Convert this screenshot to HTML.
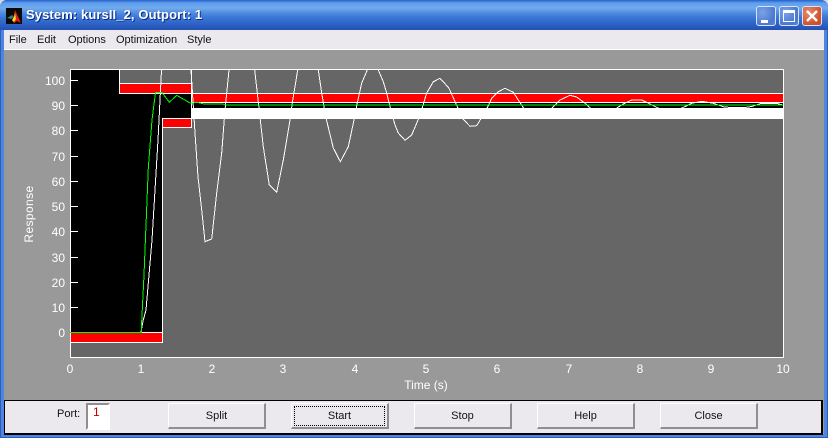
<!DOCTYPE html>
<html><head><meta charset="utf-8"><style>
html,body{margin:0;padding:0;background:#d8d8d8;}
#w{position:absolute;left:0;top:0;width:828px;height:438px;overflow:hidden;font-family:"Liberation Sans",sans-serif;background:#d4d8e4;}
#frame{position:absolute;left:0;top:0;width:828px;height:438px;box-sizing:border-box;border-radius:7px 7px 0 0;background:#4f86dc;border:1px solid #2a5cc4;}
#tb{position:absolute;left:0;top:0;width:828px;height:30px;border-radius:7px 7px 0 0;background:linear-gradient(#2a5ec8 0,#5c9eee 3px,#72aaec 8px,#4f8be0 13px,#3a74d4 18px,#2d62c6 24px,#2450b0 30px);}
#title{position:absolute;left:26px;top:7px;font-size:13px;font-weight:bold;color:#fff;text-shadow:1px 1px 0 #0a2a80;white-space:nowrap;letter-spacing:.1px;}
#menu{position:absolute;left:4px;top:30px;width:820px;height:19px;background:#ebe9ee;border-bottom:1px solid #fff;}
.m{position:absolute;top:34px;font-size:11px;line-height:13px;color:#111;white-space:nowrap;}
#fig{position:absolute;left:4px;top:50px;width:820px;height:384px;background:#999;}
#panel{position:absolute;left:4px;top:400px;width:816px;height:32px;background:#ebe9ee;border:1px solid #000;border-width:1px 2px 2px 1px;}
.b{position:absolute;top:403px;width:98px;height:26px;box-sizing:border-box;background:#ebe9ee;border:1px solid;border-width:1px 2px 2px 1px;border-color:#fff #8f8f8f #8f8f8f #fff;font-size:11px;line-height:24px;text-align:center;color:#111;}
#edit{position:absolute;left:86px;top:403px;width:24px;height:27px;box-sizing:border-box;background:#fff;border:2px solid;border-color:#8f8f8f #fff #fff #8f8f8f;color:#c00000;font-size:12px;line-height:14px;padding-left:5px;}
#port{position:absolute;left:57px;top:408px;font-size:11px;line-height:13px;color:#111;}
.wb{position:absolute;top:6px;width:20px;height:20px;box-sizing:border-box;border:1px solid #d8e4f8;border-radius:3px;background:radial-gradient(circle at 30% 30%,#7aa4e8,#4a78d0 70%,#5a88dc);}
#dots{position:absolute;left:294px;top:406px;width:91px;height:20px;box-sizing:border-box;border:1px dotted #000;}
svg{position:absolute;left:0;top:0;}
</style></head><body>
<div id="w">
<div id="frame"></div>
<div id="tb"></div>
<svg width="16" height="16" style="left:6px;top:8px" viewBox="0 0 16 16"><rect width="16" height="16" fill="#0a0a0a"/><path d="M1 10 L6 7 L8 9 L5 11 Z" fill="#3a7a80"/><path d="M9 2 L15 15 L11 13 L8 15 L6 12 L8 8 Z" fill="#e02010"/><path d="M9 5 L8 9 L6 12 L8 14 L10 11 Z" fill="#f8e020"/></svg>
<div id="title">System: kursII_2, Outport: 1</div>
<div class="wb" style="left:756px"><div style="position:absolute;left:4px;top:13px;width:7px;height:3px;background:#fff"></div></div>
<div class="wb" style="left:779px"><div style="position:absolute;left:3px;top:3px;width:12px;height:12px;box-sizing:border-box;border:1px solid #fff;border-top-width:3px"></div></div>
<div class="wb" style="left:802px;background:radial-gradient(circle at 30% 30%,#e88a70,#d0512a 70%,#c84a20)"><svg width="18" height="18" viewBox="0 0 18 18"><path d="M4 4 L14 14 M14 4 L4 14" stroke="#fff" stroke-width="2.4"/></svg></div>
<div id="menu"></div>
<div class="m" style="left:9px">File</div>
<div class="m" style="left:37px">Edit</div>
<div class="m" style="left:68px">Options</div>
<div class="m" style="left:116px">Optimization</div>
<div class="m" style="left:187px">Style</div>
<div id="fig"></div>
<svg width="828" height="438" viewBox="0 0 828 438">
<g shape-rendering="crispEdges">
<rect x="70" y="69" width="714" height="289" fill="#666"/>
<path d="M70 69H119V93H192V118H162V332H70Z" fill="#000"/>
<rect x="192" y="102" width="592" height="6" fill="#000"/>
<rect x="119" y="83" width="73" height="11" fill="#f00"/>
<rect x="192" y="93" width="591" height="10" fill="#f00"/>
<rect x="162" y="118" width="30" height="10" fill="#f00"/>
<rect x="70" y="332" width="93" height="10" fill="#f00"/>
<rect x="191" y="108" width="592" height="11" fill="#fff"/>
<g fill="#fff">
<rect x="119" y="69" width="1" height="24"/>
<rect x="119" y="83" width="73" height="1"/>
<rect x="119" y="93" width="73" height="1"/>
<rect x="191" y="69" width="1" height="50"/>
<rect x="192" y="93" width="591" height="1"/>
<rect x="192" y="102" width="591" height="1"/>
<rect x="162" y="118" width="30" height="1"/>
<rect x="162" y="127" width="30" height="1"/>
<rect x="162" y="118" width="1" height="225"/>
<rect x="191" y="118" width="1" height="10"/>
<rect x="70" y="342" width="93" height="1"/>
<rect x="70" y="332" width="93" height="1"/>
<rect x="70" y="69" width="714" height="1"/>
<rect x="70" y="357" width="714" height="1"/>
<rect x="70" y="69" width="1" height="289"/>
<rect x="783" y="69" width="1" height="289"/>
<rect x="70" y="80" width="8" height="1"/><rect x="70" y="105" width="8" height="1"/><rect x="70" y="130" width="8" height="1"/><rect x="70" y="156" width="8" height="1"/><rect x="70" y="181" width="8" height="1"/><rect x="70" y="206" width="8" height="1"/><rect x="70" y="231" width="8" height="1"/><rect x="70" y="257" width="8" height="1"/><rect x="70" y="282" width="8" height="1"/><rect x="70" y="307" width="8" height="1"/>
</g>
<clipPath id="c"><rect x="70" y="70" width="713" height="287"/></clipPath>
<g clip-path="url(#c)" fill="none">
<path stroke="#fff" d="M141 332L143 321L146 310L152 240L158 140L161.5 70L162 60M190 60L191 70L195 133L198 177L201.7 210L205 241.7L211.7 239L216.7 193L221.7 153L225 110L229 70L230 60M254 60L254.7 70L260 117L263.3 146.7L269.3 185L276.7 192.3L283.3 160L290 120L292.3 103L297.7 70L299 60M317 60L318.3 70L321.7 93L326 118L333.3 148L340.3 161.7L348.3 146.7L354 120L357.3 103L361.7 83L367.3 70L371 60H374L378.3 70L383.3 81.7L386.7 93L390 106.7L395 125L398.3 133L405 140.3L411.7 135L418.3 119.3L422.3 107.7L426.7 93L433.3 81.7L440 78.3L443.3 81.7L449 88.3L457.3 106.7L463.3 119.3L470 126.3L476.7 125.7L480.7 119L487.3 107.7L491.7 98.3L498.3 91.7L505 88.3L513.3 92.3L523.3 107.7L530 115L538 117L545 115L552.7 107.3L560 100L570 95.3L576.7 97L585 103.3L590 107.7L600 113L610 113L617.3 107.7L623.3 104L631.7 100L641.7 100L650 104L657.3 107.7L665 110L675 110L682.7 107.7L691.7 103.3L701.7 101.3L713.3 103.3L723.3 106.7L730 107.5L745 107.5L751.7 106.5L760 103.7L778 103.7L783 105"/>
<path stroke="#00ff00" d="M70 332.5H141.7V321L144 275L148.3 168L152 120L155.5 92.5H162L169.3 102.3L176.7 95.3L190 103L198 102.5L204 104H223L225 105H783"/>
</g>
</g>
<g fill="#fff" font-family="Liberation Sans" font-size="12" text-anchor="end">
<text x="65" y="85">100</text><text x="65" y="110">90</text><text x="65" y="135">80</text><text x="65" y="161">70</text><text x="65" y="186">60</text><text x="65" y="211">50</text><text x="65" y="236">40</text><text x="65" y="262">30</text><text x="65" y="287">20</text><text x="65" y="312">10</text><text x="65" y="337">0</text>
</g>
<g fill="#fff" font-family="Liberation Sans" font-size="12" text-anchor="middle">
<text x="70" y="373">0</text><text x="141" y="373">1</text><text x="212" y="373">2</text><text x="283" y="373">3</text><text x="355" y="373">4</text><text x="426" y="373">5</text><text x="497" y="373">6</text><text x="569" y="373">7</text><text x="640" y="373">8</text><text x="711" y="373">9</text><text x="783" y="373">10</text>
<text x="426" y="389">Time (s)</text>
<text transform="translate(33 214) rotate(-90)" letter-spacing=".4">Response</text>
</g>
</svg>
<div id="panel"></div>
<div id="port">Port:</div>
<div id="edit">1</div>
<div class="b" style="left:168px">Split</div>
<div class="b" style="left:291px">Start</div>
<div id="dots"></div>
<div class="b" style="left:414px">Stop</div>
<div class="b" style="left:537px">Help</div>
<div class="b" style="left:660px">Close</div>
</div>
</body></html>
